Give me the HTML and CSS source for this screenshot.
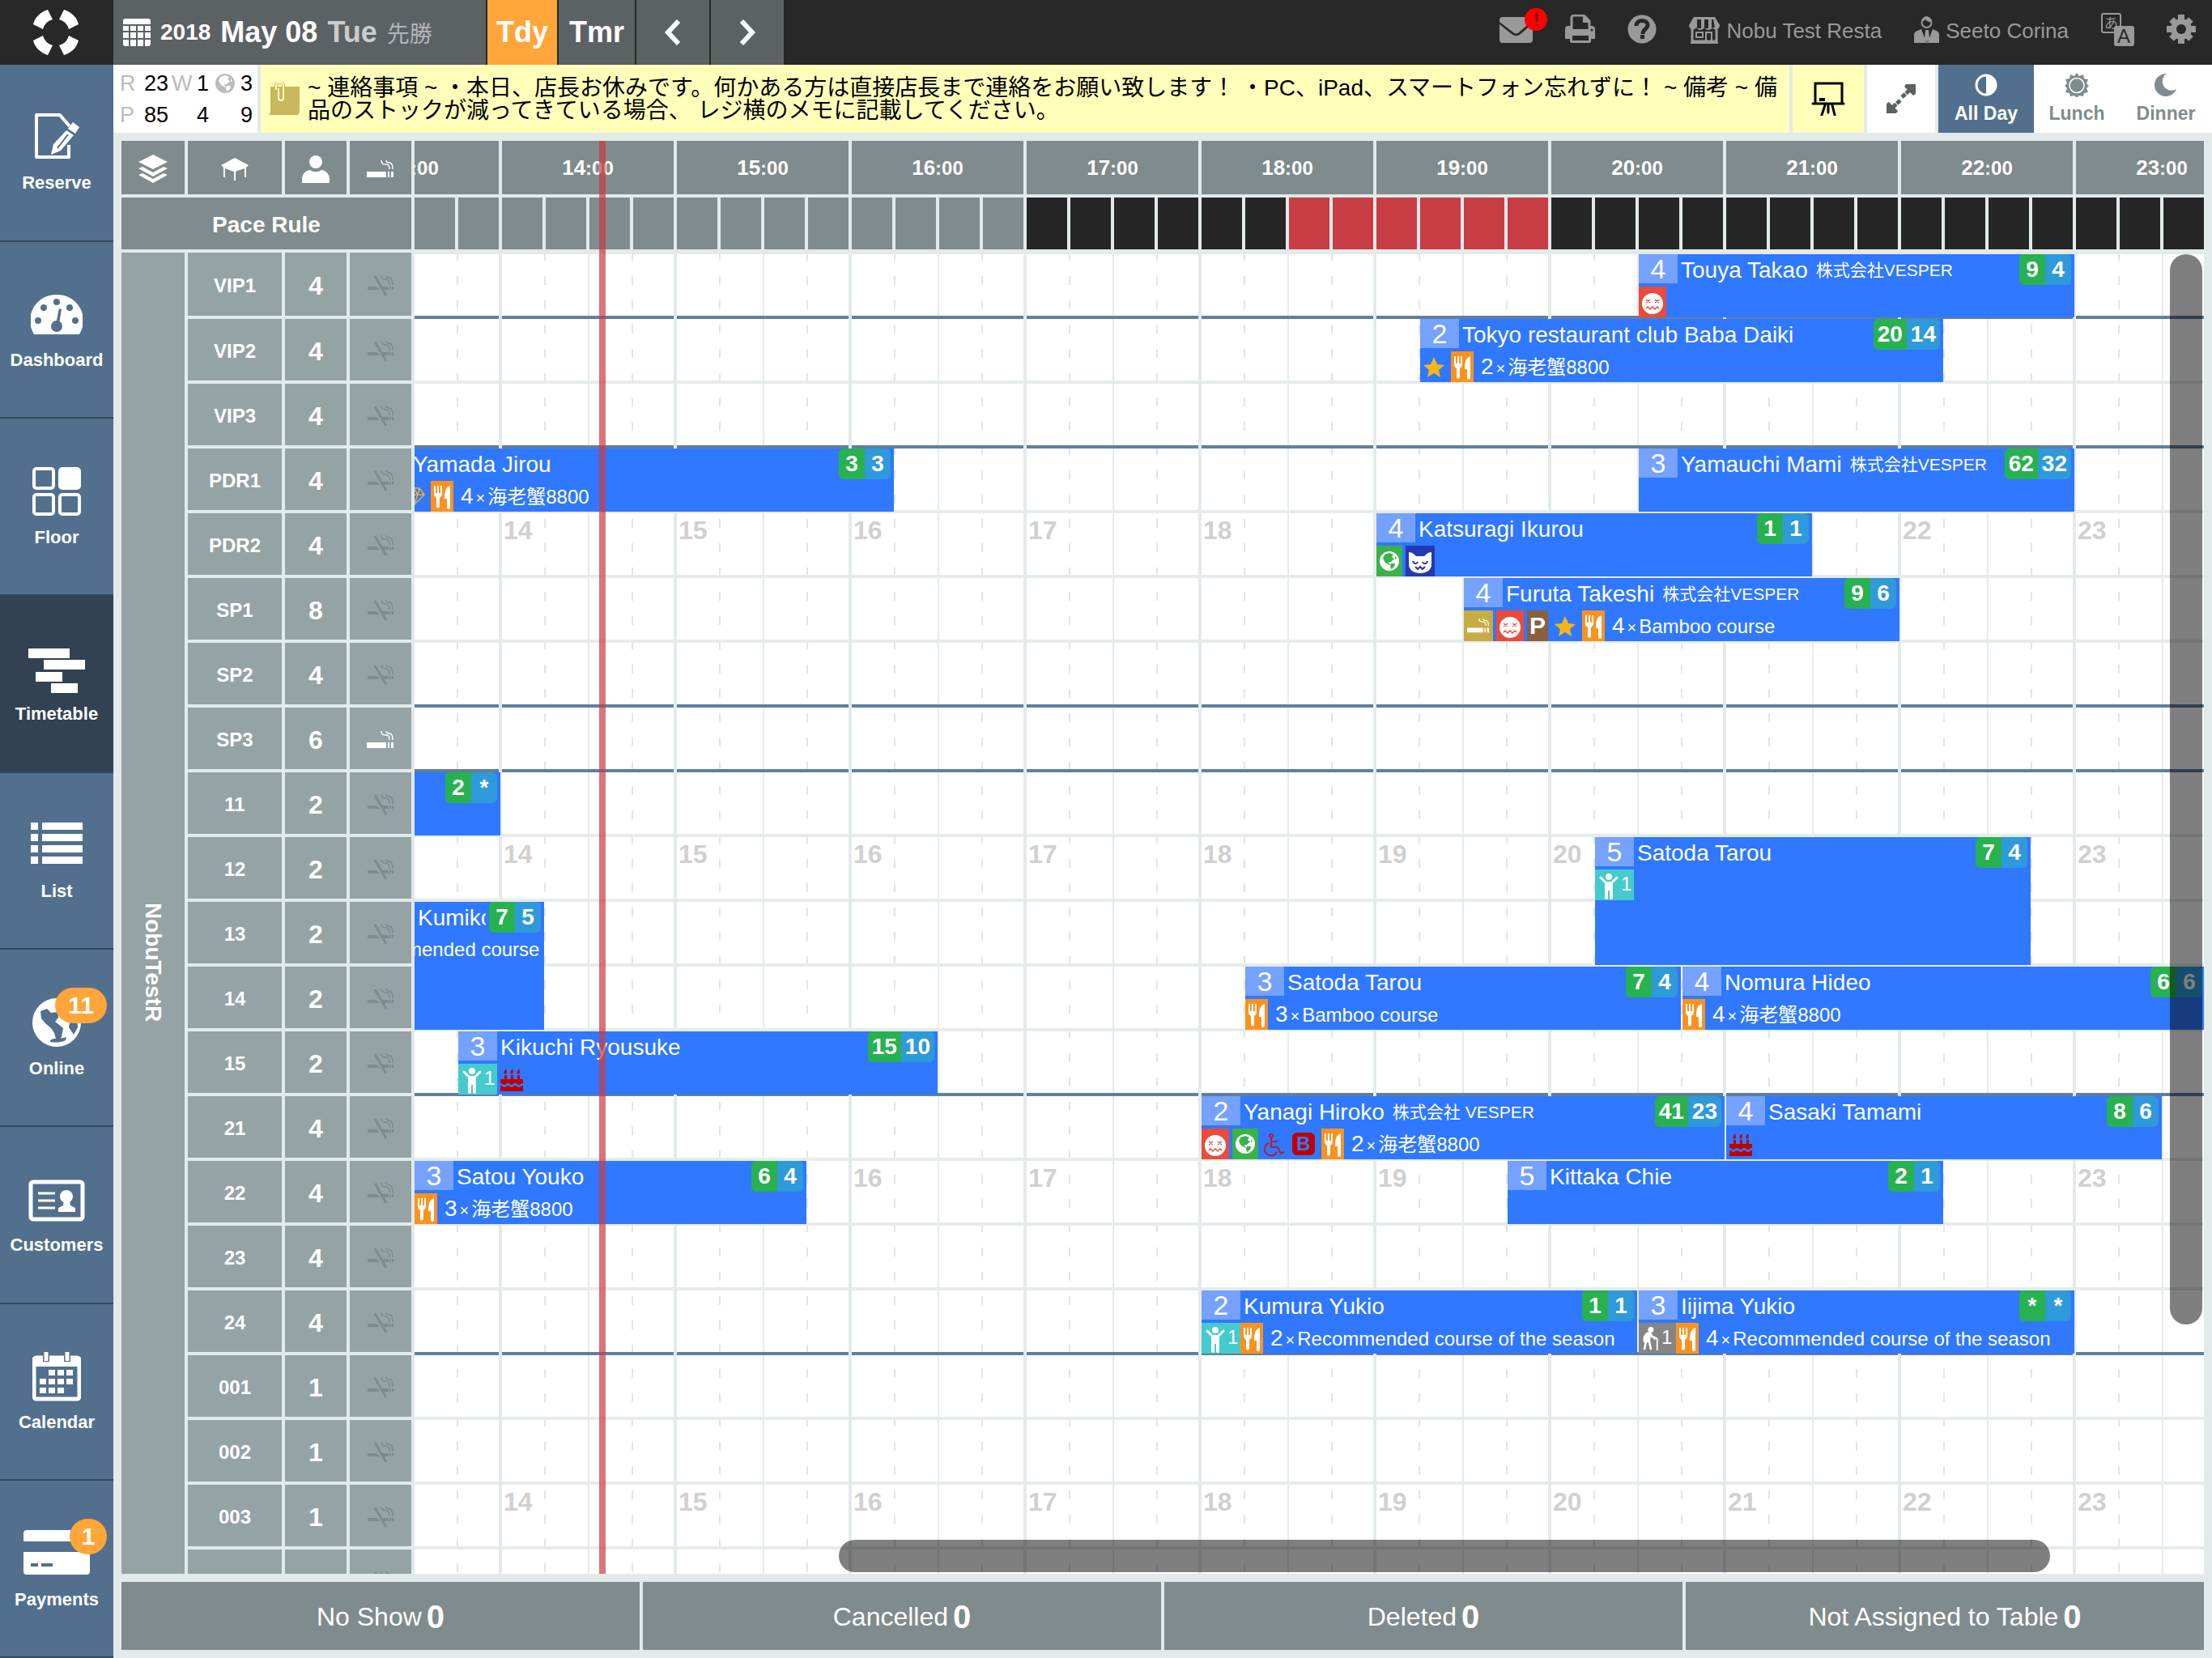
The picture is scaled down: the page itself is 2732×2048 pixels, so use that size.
FILE: index.html
```html
<!DOCTYPE html>
<html lang="en">
<head>
    <meta charset="UTF-8">
    <meta name="viewport" content="width=device-width, initial-scale=1.0">
    <title>Timetable</title>
    <link rel="stylesheet" href="styles.css">
</head>
<body>
    <!-- icons -->
    <svg class="sprite" width="0" height="0" aria-hidden="true">
        <symbol id="i-smoke" viewBox="0 0 34 24">
            <path d="M0 15h24v7H0zM26 15h2v7h-2zM30 15h3v7h-3z" fill="currentColor"/>
            <path d="M18 1c0 5 3 5 6 5s4 2 4 6M24 1c0 3 2 3 4 3s4 2 4 8" fill="none" stroke="currentColor" stroke-width="1.5"/>
        </symbol>
        <symbol id="i-nosmoke" viewBox="0 0 32 28">
            <path d="M0 15h11l4 4H0zM18 15h8v4h-6zM27 15h2v4h-2zM30 15h2v4h-2z" fill="currentColor"/>
            <path d="M9 2L23 26" stroke="currentColor" stroke-width="3"/>
            <path d="M17 1c0 5 3 5 6 5s4 2 4 7M23 1c0 3 2 3 4 3s4 3 4 9" fill="none" stroke="currentColor" stroke-width="1.5"/>
        </symbol>
        <symbol id="i-fork" viewBox="0 0 28 38">
            <path d="M4 6h2v9h2V6h2v9h2V6h2v10c0 3-2 4-3 5v10a2 2 0 0 1-4 1V21c-1-1-3-2-3-5z" fill="#fff"/>
            <path d="M24 6v27a2 2 0 0 1-4 0V22h-3c0-8 1-14 7-16z" fill="#fff"/>
        </symbol>
        <symbol id="i-face" viewBox="0 0 34 38">
            <circle cx="17" cy="21" r="13" fill="#fff"/>
            <path d="M9 16l5 4m0-4l-5 4M20 16l5 4m0-4l-5 4M9 27l2-2 3 3 3-3 3 3 3-3 2 2" fill="none" stroke="#e94b3c" stroke-width="1.5"/>
        </symbol>
        <symbol id="i-globe" viewBox="0 0 24 24">
            <circle cx="12" cy="12" r="12" fill="currentColor"/>
            <path class="land" d="M6 4l6-2 5 2-2 3 3 2-4 4-4 1 3 2-1 1-5-3-3-5zM14 15l5 0-1 4-4 3-1-4zM19 6l2 3-2 1z"/>
        </symbol>
        <symbol id="i-star" viewBox="0 0 34 38">
            <path d="M17 7l4 9 9 1-7 6 2 9-8-5-8 5 2-9-7-6 9-1z" fill="#f7b614"/>
        </symbol>
        <symbol id="i-cat" viewBox="0 0 36 38">
            <path d="M4 8c4 0 7 3 9 5h10c2-2 5-5 9-5v15c0 7-6 11-14 11S4 30 4 23z" fill="#fff"/>
            <path d="M9 19c1 4 5 4 6 1M21 20c1 3 5 3 6-1M12 26l3 3 3-3 3 3 3-3" fill="none" stroke="#2637b3" stroke-width="2"/>
        </symbol>
        <symbol id="i-chair" viewBox="0 0 30 38">
            <g fill="none" stroke="#b3202e" stroke-width="2">
                <circle cx="12" cy="9" r="2"/>
                <path d="M12 12v11h8l4 8 4-2M13 16h7M9 18a8 8 0 1 0 10 11"/>
            </g>
        </symbol>
        <symbol id="i-cake" viewBox="0 0 36 38">
            <path d="M9 14h3v8H9zM17 14h3v8h-3zM25 14h3v8h-3zM10 13c-3-2-1-4 1-7 1 4 2 5-1 7zM18 13c-3-2-1-4 1-7 1 4 2 5-1 7zM26 13c-3-2-1-4 1-7 1 4 2 5-1 7zM4 19h28v5c-3 0-3 2-5 2s-2-2-5-2-2 2-4 2-2-2-5-2-2 2-4 2-2-2-5-2zM4 27c3 0 3 2 5 2s2-2 4-2 3 2 5 2 2-2 4-2 3 2 5 2 2-2 5-2v7H4z" fill="#c00000"/>
        </symbol>
        <symbol id="i-gem" viewBox="0 0 34 38">
            <path d="M10 9h14l6 8-13 13L4 17zM4 17h26M10 9l2 8 5 13 5-13 2-8M12 17l5-8 5 8" fill="none" stroke="#f2ae2e" stroke-width="1.5"/>
        </symbol>
        <symbol id="i-child" viewBox="0 0 32 38">
            <circle cx="17" cy="9" r="4" fill="#fff"/>
            <path d="M7 10l7 7h6l7-7" fill="none" stroke="#fff" stroke-width="3" stroke-linecap="round"/>
            <path d="M12 15h10v20a2 2 0 0 1-4 0v-9h-2v9a2 2 0 0 1-4 0z" fill="#fff"/>
        </symbol>
        <symbol id="i-elder" viewBox="0 0 32 38">
            <circle cx="17" cy="7" r="4" fill="#fff"/>
            <path d="M12 12c4-1 6 1 6 4l6 3M15 24l2 10M8 34l2-9" fill="none" stroke="#fff" stroke-width="3" stroke-linecap="round"/>
            <path d="M13 11c-6 2-8 7-6 14h9l1-12z" fill="#fff"/>
            <path d="M22 21c0-3 4-3 4 0v15" fill="none" stroke="#fff" stroke-width="2"/>
        </symbol>
    </svg>

    <header class="topbar">
        <a class="logo" href="#" aria-label="Home">
            <svg width="58" height="58" viewBox="0 0 58 58">
                <g fill="#fff">
                    <path d="M19 1l6 12a17 17 0 0 0-12 12L1 19C3 11 9 4 19 1z"/>
                    <path d="M39 1l-6 12a17 17 0 0 1 12 12l12-6C55 11 49 4 39 1z"/>
                    <path d="M19 57l6-12a17 17 0 0 1-12-12L1 39c2 8 8 15 18 18z"/>
                    <path d="M39 57l-6-12a17 17 0 0 0 12-12l12 6c-2 8-8 15-18 18z"/>
                </g>
            </svg>
        </a>
        <button class="datebtn" type="button">
            <svg width="34" height="34" viewBox="0 0 34 34" fill="#fff">
                <path d="M3 0h28a3 3 0 0 1 3 3v4H0V3a3 3 0 0 1 3-3zM0 9h7v6H0zM9 9h7v6H9zM18 9h7v6h-7zM27 9h7v6h-7zM0 17h7v7H0zM9 17h7v7H9zM18 17h7v7h-7zM27 17h7v7h-7zM0 26h7v8H3a3 3 0 0 1-3-3zM9 26h7v8H9zM18 26h7v8h-7zM27 26h7v5a3 3 0 0 1-3 3h-4z"/>
            </svg>
            <span class="year">2018</span>
            <span class="day">May 08</span>
            <span class="wday">Tue</span>
            <span class="rokuyo">先勝</span>
        </button>
        <button class="tabbtn today" type="button">Tdy</button>
        <button class="tabbtn" type="button">Tmr</button>
        <button class="arrow" type="button" aria-label="Previous day">
            <svg width="24" height="34" viewBox="0 0 24 34"><path d="M19 3L6 17l13 14" fill="none" stroke="#fff" stroke-width="6"/></svg>
        </button>
        <button class="arrow" type="button" aria-label="Next day">
            <svg width="24" height="34" viewBox="0 0 24 34"><path d="M5 3l13 14L5 31" fill="none" stroke="#fff" stroke-width="6"/></svg>
        </button>
        <div class="tools">
            <a class="mail" href="#" aria-label="Messages">
                <svg width="41" height="36" viewBox="0 0 41 36" fill="currentColor">
                    <path d="M4 3h33a4 4 0 0 1 4 4L24 22c-3 2-4 2-7 0L0 9V7a4 4 0 0 1 4-4z"/>
                    <path d="M0 12l15 12c4 3 7 3 11 0l15-13v20a4 4 0 0 1-4 4H4a4 4 0 0 1-4-4z"/>
                </svg>
                <span class="alert">!</span>
            </a>
            <a href="#" aria-label="Print">
                <svg width="37" height="36" viewBox="0 0 37 36">
                    <path d="M8 18V4a3 3 0 0 1 3-3h12l7 7v10" fill="none" stroke="currentColor" stroke-width="3"/>
                    <path d="M22 1h3l5 5v4h-8zM4 14h3v4h23v-4h3a4 4 0 0 1 4 4v12h-5v3a2 2 0 0 1-2 2H8a2 2 0 0 1-2-2v-3H0V18a4 4 0 0 1 4-4zM9 26v6h20v-6z" fill="currentColor" fill-rule="evenodd"/>
                    <circle cx="33" cy="19" r="1.5" fill="#282828"/>
                </svg>
            </a>
            <a href="#" aria-label="Help">
                <svg width="36" height="36" viewBox="0 0 36 36">
                    <circle cx="18" cy="18" r="17.5" fill="currentColor"/>
                    <path d="M11 14c0-9 14-8 14-1 0 5-6 5-6 11" fill="none" stroke="#282828" stroke-width="5"/>
                    <path d="M16 25h5v5h-5z" fill="#282828"/>
                </svg>
            </a>
            <a href="#">
                <svg width="38" height="36" viewBox="0 0 38 36">
                    <path d="M6 3h26l6 10c0 6-7 7-9 3-2 4-8 4-10 0-2 4-8 4-10 0-2 4-9 3-9-3z" fill="currentColor"/>
                    <path d="M10 6h5v11h-5zM19 6h5v11h-5zM28 6h2l2 10h-4z" fill="#282828"/>
                    <path d="M4 18v15h30V18" fill="none" stroke="currentColor" stroke-width="3"/>
                    <path d="M2 35h34M9 22h8v6H9zM21 34V22h7v12" fill="none" stroke="currentColor" stroke-width="2"/>
                </svg>
                <span>Nobu Test Resta</span>
            </a>
            <a href="#">
                <svg width="31" height="36" viewBox="0 0 31 36">
                    <circle cx="15.5" cy="10" r="6" fill="none" stroke="currentColor" stroke-width="2"/>
                    <path d="M9 9c4-1 5-3 5-3s3 4 8 3c-1-9-12-9-13 0zM0 35V25c0-4 4-5 9-7l6 16h2l6-16c5 2 8 3 8 7v10zM14 19h4l1 11-3 4-3-4z" fill="currentColor"/>
                </svg>
                <span>Seeto Corina</span>
            </a>
            <a href="#" aria-label="Language">
                <svg width="41" height="41" viewBox="0 0 41 41">
                    <rect x="1" y="1" width="23" height="23" rx="2" fill="none" stroke="currentColor" stroke-width="2"/>
                    <text x="4" y="19" font-size="17" fill="currentColor">あ</text>
                    <rect x="16" y="16" width="25" height="25" rx="3" fill="currentColor"/>
                    <text x="20" y="37" font-size="24" fill="#282828">A</text>
                </svg>
            </a>
            <a href="#" aria-label="Settings">
                <svg width="36" height="36" viewBox="0 0 36 36">
                    <g stroke="currentColor" stroke-width="8"><path d="M18 0v36M0 18h36M6 6l24 24M30 6L6 30"/></g>
                    <circle cx="18" cy="18" r="13" fill="currentColor"/>
                    <circle cx="18" cy="18" r="6" fill="#282828"/>
                </svg>
            </a>
        </div>
    </header>

    <div class="page">
        <nav class="side">
            <a href="#">
                <svg width="60" height="64" viewBox="0 0 60 64">
                    <path d="M46 19L34 5H5v52h40V42" fill="none" stroke="#fff" stroke-width="4" stroke-linejoin="round"/>
                    <path d="M50 14l8 6-5 8-9-6zM42 24l9 6-16 19-12 5 3-13z" fill="#fff"/>
                    <path d="M44 29L31 46" stroke="#52708d" stroke-width="2"/>
                </svg>
                Reserve
            </a>
            <a href="#">
                <svg width="64" height="64" viewBox="0 0 64 64">
                    <path d="M32 8a32 32 0 0 1 28 49H4A32 32 0 0 1 32 8z" fill="#fff"/>
                    <g fill="#52708d"><circle cx="32" cy="17" r="4"/><circle cx="16" cy="24" r="4"/><circle cx="48" cy="24" r="4"/><circle cx="9" cy="40" r="4"/><circle cx="55" cy="40" r="4"/><circle cx="32" cy="47" r="7"/><path d="M35 25l3 1-3 18h-4z"/></g>
                </svg>
                Dashboard
            </a>
            <a href="#">
                <svg width="60" height="64" viewBox="0 0 60 64" fill="none" stroke="#fff" stroke-width="4">
                    <rect x="2" y="4" width="24" height="24" rx="3"/>
                    <rect x="34" y="4" width="24" height="24" rx="3" fill="#fff"/>
                    <rect x="2" y="36" width="24" height="24" rx="3"/>
                    <rect x="34" y="36" width="24" height="24" rx="3"/>
                </svg>
                Floor
            </a>
            <a class="active" href="#">
                <svg width="70" height="64" viewBox="0 0 70 64" fill="#fff">
                    <rect x="0" y="8" width="51" height="12"/>
                    <rect x="19" y="22" width="51" height="12"/>
                    <rect x="9" y="37" width="33" height="12"/>
                    <rect x="28" y="51" width="33" height="12"/>
                </svg>
                Timetable
            </a>
            <a href="#">
                <svg width="64" height="64" viewBox="0 0 64 64" fill="#fff">
                    <path d="M0 4h9v9H0zM14 4h50v9H14zM0 18h9v9H0zM14 18h50v9H14zM0 32h9v9H0zM14 32h50v9H14zM0 46h9v9H0zM14 46h50v9H14z"/>
                </svg>
                List
            </a>
            <a href="#">
                <svg width="60" height="64" viewBox="0 0 60 64">
                    <circle cx="30" cy="32" r="30" fill="#fff"/>
                    <path d="M10 18l8-3 5 5 9-1v7l-4 5 4 3 6 5-2 11-6 6-3-11-4-6-7-6-5-6zM48 22l7 4 1 12-5 9-6-9zM22 54c6-4 13-1 20-4l-1 4c-6 3-13 3-19 2z" fill="#52708d"/>
                </svg>
                Online
                <span class="count">11</span>
            </a>
            <a href="#">
                <svg width="70" height="64" viewBox="0 0 70 64">
                    <rect x="3" y="11" width="64" height="46" rx="3" fill="none" stroke="#fff" stroke-width="5"/>
                    <path d="M12 25h21M12 34h21M12 43h21" stroke="#fff" stroke-width="3"/>
                    <circle cx="47" cy="29" r="8" fill="#fff"/>
                    <path d="M44 34h7l1 6 6 3v5H37v-5l6-3z" fill="#fff"/>
                </svg>
                Customers
            </a>
            <a href="#">
                <svg width="60" height="64" viewBox="0 0 60 64">
                    <rect x="2" y="9" width="56" height="51" rx="3" fill="none" stroke="#fff" stroke-width="5"/>
                    <path d="M2 8h56v12H2z" fill="#fff"/>
                    <path d="M17 4v10M43 4v10" stroke="#52708d" stroke-width="8"/>
                    <path d="M17 2v11M43 2v11" stroke="#fff" stroke-width="5"/>
                    <path d="M20 24h8v7h-8zM31 24h8v7h-8zM42 24h8v7h-8zM9 35h8v7H9zM20 35h8v7h-8zM31 35h8v7h-8zM42 35h8v7h-8zM9 46h8v7H9zM20 46h8v7h-8zM31 46h8v7h-8z" fill="#fff"/>
                </svg>
                Calendar
            </a>
            <a href="#">
                <svg width="82" height="64" viewBox="0 0 82 64">
                    <path d="M4 3h74a4 4 0 0 1 4 4v10H0V7a4 4 0 0 1 4-4zM0 30h82v24a4 4 0 0 1-4 4H4a4 4 0 0 1-4-4z" fill="#fff"/>
                    <path d="M9 46h9M22 46h14" stroke="#52708d" stroke-width="4"/>
                </svg>
                Payments
                <span class="count one">1</span>
            </a>
        </nav>

        <main class="main">
            <section class="infobar">
                <div class="stats">
                    <span class="lbl">R</span><span>23</span><span class="lbl">W</span><span>1</span>
                    <span class="lbl"><svg width="24" height="24"><use href="#i-globe"/></svg></span><span>3</span>
                    <span class="lbl">P</span><span>85</span><span></span><span>4</span><span></span><span>9</span>
                </div>
                <div class="notice">
                    <svg width="38" height="42" viewBox="0 0 38 42">
                        <path d="M2 6h36v28c0 4-1 6-2 7H0c2-2 2-5 2-9z" fill="#c9b75e"/>
                        <path d="M9 10V5a4 4 0 0 1 9 0v15a3 3 0 0 1-6 0V8" fill="none" stroke="#c9b75e" stroke-width="4"/>
                        <path d="M9 10V5a4 4 0 0 1 9 0v15a3 3 0 0 1-6 0V8" fill="none" stroke="#ffffba" stroke-width="2"/>
                    </svg>
                    <p>~ 連絡事項 ~ ・本日、店長お休みです。何かある方は直接店長まで連絡をお願い致します！ ・PC、iPad、スマートフォン忘れずに！ ~ 備考 ~ 備<br>品のストックが減ってきている場合、 レジ横のメモに記載してください。</p>
                </div>
                <button class="easel" type="button" aria-label="Board">
                    <svg width="42" height="42" viewBox="0 0 42 42" fill="none" stroke="#000" stroke-width="3" stroke-linecap="round">
                        <path d="M5 26V2h33v24M2 27h38M17 29l-4 12M26 29l3 12M21 29v9"/>
                        <path d="M10 22h7" stroke-width="4" stroke-linecap="butt"/>
                    </svg>
                </button>
                <button class="expand" type="button" aria-label="Full screen">
                    <svg width="36" height="36" viewBox="0 0 36 36">
                        <path d="M36 0v12l-3 2L22 3l2-3zM0 36V24l3-2 11 11-2 3z" fill="#5b6265"/>
                        <path d="M30 6L19 16M6 30l11-10" stroke="#5b6265" stroke-width="5" stroke-dasharray="8 1"/>
                    </svg>
                </button>
                <button class="mode on" type="button">
                    <svg width="28" height="30" viewBox="0 0 28 30"><circle cx="14" cy="15" r="12" fill="none" stroke="#fff" stroke-width="3"/><path d="M14 3a12 12 0 0 1 0 24z" fill="#fff"/></svg>
                    All Day
                </button>
                <button class="mode" type="button">
                    <svg width="30" height="30" viewBox="0 0 30 30" fill="currentColor"><path d="M15 0l3 4 5-2 1 5 5 1-2 5 3 3-3 3 2 5-5 1-1 4-5-1-3 3-3-3-5 1-1-4-5-1 2-5-3-3 3-3-2-5 5-1 1-5 5 2z"/><circle cx="15" cy="15.5" r="9" stroke="#fff" stroke-width="1.5"/></svg>
                    Lunch
                </button>
                <button class="mode" type="button">
                    <svg width="28" height="30" viewBox="0 0 28 30" fill="currentColor"><path d="M15 1A14 14 0 1 0 27 20 11 11 0 0 1 15 1z"/></svg>
                    Dinner
                </button>
            </section>

            <section class="schedule">
                <table class="tables">
                    <colgroup><col class="c-area"><col class="c-name"><col class="c-cap"><col class="c-smoke"></colgroup>
                    <thead>
                        <tr>
                            <th aria-label="Area"><svg width="36" height="36" viewBox="0 0 36 36" fill="#fff"><path d="M18 0l18 9-18 9L0 9zM0 17l5-2 13 7 13-7 5 2-18 10zM0 25l5-2 13 7 13-7 5 2-18 10z"/></svg></th>
                            <th aria-label="Table"><svg width="34" height="28" viewBox="0 0 34 28" fill="#fff"><path d="M17 0l17 9-3 3v12h-2V13l-9 3-2 1v11h-2V17l-11-4v11H3V12L0 9z"/></svg></th>
                            <th aria-label="Seats"><svg width="34" height="34" viewBox="0 0 34 34" fill="#fff"><circle cx="17" cy="8" r="8"/><path d="M0 34v-5c0-6 5-11 10-11 4 3 10 3 14 0 5 0 10 5 10 11v5z"/></svg></th>
                            <th aria-label="Smoking"><svg width="34" height="24"><use href="#i-smoke"/></svg></th>
                        </tr>
                        <tr class="pace-head"><th colspan="4">Pace Rule</th></tr>
                    </thead>
                    <tbody>
                        <tr class="first"><th class="area" rowspan="22"><span>NobuTestR</span></th><th>VIP1</th><td>4</td><td><svg width="32" height="28"><use href="#i-nosmoke"/></svg></td></tr>
                        <tr><th>VIP2</th><td>4</td><td><svg width="32" height="28"><use href="#i-nosmoke"/></svg></td></tr>
                        <tr><th>VIP3</th><td>4</td><td><svg width="32" height="28"><use href="#i-nosmoke"/></svg></td></tr>
                        <tr><th>PDR1</th><td>4</td><td><svg width="32" height="28"><use href="#i-nosmoke"/></svg></td></tr>
                        <tr><th>PDR2</th><td>4</td><td><svg width="32" height="28"><use href="#i-nosmoke"/></svg></td></tr>
                        <tr><th>SP1</th><td>8</td><td><svg width="32" height="28"><use href="#i-nosmoke"/></svg></td></tr>
                        <tr><th>SP2</th><td>4</td><td><svg width="32" height="28"><use href="#i-nosmoke"/></svg></td></tr>
                        <tr><th>SP3</th><td>6</td><td class="ok"><svg width="34" height="24"><use href="#i-smoke"/></svg></td></tr>
                        <tr><th>11</th><td>2</td><td><svg width="32" height="28"><use href="#i-nosmoke"/></svg></td></tr>
                        <tr><th>12</th><td>2</td><td><svg width="32" height="28"><use href="#i-nosmoke"/></svg></td></tr>
                        <tr><th>13</th><td>2</td><td><svg width="32" height="28"><use href="#i-nosmoke"/></svg></td></tr>
                        <tr><th>14</th><td>2</td><td><svg width="32" height="28"><use href="#i-nosmoke"/></svg></td></tr>
                        <tr><th>15</th><td>2</td><td><svg width="32" height="28"><use href="#i-nosmoke"/></svg></td></tr>
                        <tr><th>21</th><td>4</td><td><svg width="32" height="28"><use href="#i-nosmoke"/></svg></td></tr>
                        <tr><th>22</th><td>4</td><td><svg width="32" height="28"><use href="#i-nosmoke"/></svg></td></tr>
                        <tr><th>23</th><td>4</td><td><svg width="32" height="28"><use href="#i-nosmoke"/></svg></td></tr>
                        <tr><th>24</th><td>4</td><td><svg width="32" height="28"><use href="#i-nosmoke"/></svg></td></tr>
                        <tr><th>001</th><td>1</td><td><svg width="32" height="28"><use href="#i-nosmoke"/></svg></td></tr>
                        <tr><th>002</th><td>1</td><td><svg width="32" height="28"><use href="#i-nosmoke"/></svg></td></tr>
                        <tr><th>003</th><td>1</td><td><svg width="32" height="28"><use href="#i-nosmoke"/></svg></td></tr>
                        <tr><th></th><td></td><td><svg width="32" height="28"><use href="#i-nosmoke"/></svg></td></tr>
                        <tr><th></th><td></td><td></td></tr>
                    </tbody>
                </table>

                <div class="timeline">
                    <div class="canvas">
                        <div class="hours">
                            <span>13<small>:00</small></span><span>14<small>:00</small></span><span>15<small>:00</small></span><span>16<small>:00</small></span><span>17<small>:00</small></span><span>18<small>:00</small></span><span>19<small>:00</small></span><span>20<small>:00</small></span><span>21<small>:00</small></span><span>22<small>:00</small></span><span>23<small>:00</small></span>
                        </div>
                        <div class="pace">
                            <i></i><i></i><i></i><i></i><i></i><i></i><i></i><i></i><i></i><i></i><i></i><i></i><i></i><i></i><i></i><i></i>
                            <i class="shut"></i><i class="shut"></i><i class="shut"></i><i class="shut"></i><i class="shut"></i><i class="shut"></i>
                            <i class="full"></i><i class="full"></i><i class="full"></i><i class="full"></i><i class="full"></i><i class="full"></i>
                            <i class="shut"></i><i class="shut"></i><i class="shut"></i><i class="shut"></i><i class="shut"></i><i class="shut"></i><i class="shut"></i><i class="shut"></i><i class="shut"></i><i class="shut"></i><i class="shut"></i><i class="shut"></i><i class="shut"></i><i class="shut"></i><i class="shut"></i><i class="shut"></i>
                        </div>

                        <!-- 4 columns per hour, first column is 13:00 -->
                        <div class="grid">
                            <div class="lane group" style="--row:1"></div>
                            <div class="lane" style="--row:2"></div>
                            <div class="lane group" style="--row:3"></div>
                            <div class="lane" style="--row:4"></div>
                            <div class="lane" style="--row:5"></div>
                            <div class="lane" style="--row:6"></div>
                            <div class="lane group" style="--row:7"></div>
                            <div class="lane group" style="--row:8"></div>
                            <div class="lane" style="--row:9"></div>
                            <div class="lane" style="--row:10"></div>
                            <div class="lane" style="--row:11"></div>
                            <div class="lane" style="--row:12"></div>
                            <div class="lane group" style="--row:13"></div>
                            <div class="lane" style="--row:14"></div>
                            <div class="lane" style="--row:15"></div>
                            <div class="lane" style="--row:16"></div>
                            <div class="lane group" style="--row:17"></div>
                            <div class="lane" style="--row:18"></div>
                            <div class="lane" style="--row:19"></div>
                            <div class="lane" style="--row:20"></div>
                            <div class="lane" style="--row:21"></div>

                            <span class="hr" style="--row:5;--from:5">14</span><span class="hr" style="--row:5;--from:9">15</span><span class="hr" style="--row:5;--from:13">16</span><span class="hr" style="--row:5;--from:17">17</span><span class="hr" style="--row:5;--from:21">18</span><span class="hr" style="--row:5;--from:37">22</span><span class="hr" style="--row:5;--from:41">23</span>
                            <span class="hr" style="--row:10;--from:5">14</span><span class="hr" style="--row:10;--from:9">15</span><span class="hr" style="--row:10;--from:13">16</span><span class="hr" style="--row:10;--from:17">17</span><span class="hr" style="--row:10;--from:21">18</span><span class="hr" style="--row:10;--from:25">19</span><span class="hr" style="--row:10;--from:29">20</span><span class="hr" style="--row:10;--from:41">23</span>
                            <span class="hr" style="--row:15;--from:13">16</span><span class="hr" style="--row:15;--from:17">17</span><span class="hr" style="--row:15;--from:21">18</span><span class="hr" style="--row:15;--from:25">19</span><span class="hr" style="--row:15;--from:41">23</span>
                            <span class="hr" style="--row:20;--from:5">14</span><span class="hr" style="--row:20;--from:9">15</span><span class="hr" style="--row:20;--from:13">16</span><span class="hr" style="--row:20;--from:17">17</span><span class="hr" style="--row:20;--from:21">18</span><span class="hr" style="--row:20;--from:25">19</span><span class="hr" style="--row:20;--from:29">20</span><span class="hr" style="--row:20;--from:33">21</span><span class="hr" style="--row:20;--from:37">22</span><span class="hr" style="--row:20;--from:41">23</span>

                            <div class="event" style="--row:1;--from:31;--to:41">
                                <div class="head"><span class="party">4</span><span class="who">Touya Takao</span><span class="company">株式会社VESPER</span><span class="visits"><b>9</b><b>4</b></span></div>
                                <div class="tags"><svg class="tag t34 red"><use href="#i-face"/></svg></div>
                            </div>
                            <div class="event" style="--row:2;--from:26;--to:38">
                                <div class="head"><span class="party">2</span><span class="who">Tokyo restaurant club Baba Daiki</span><span class="visits"><b>20</b><b>14</b></span></div>
                                <div class="tags"><svg class="tag t34"><use href="#i-star"/></svg><svg class="tag t28 orange"><use href="#i-fork"/></svg><span class="course"><em>2</em><i>×</i>海老蟹8800</span></div>
                            </div>
                            <div class="event" style="--row:4;--from:2;--to:14">
                                <div class="head"><span class="party off"></span><span class="who">Yamada Jirou</span><span class="visits"><b>3</b><b>3</b></span></div>
                                <div class="tags after-chip"><svg class="tag t34"><use href="#i-gem"/></svg><svg class="tag t28 orange"><use href="#i-fork"/></svg><span class="course"><em>4</em><i>×</i>海老蟹8800</span></div>
                            </div>
                            <div class="event" style="--row:4;--from:31;--to:41">
                                <div class="head"><span class="party">3</span><span class="who">Yamauchi Mami</span><span class="company">株式会社VESPER</span><span class="visits"><b>62</b><b>32</b></span></div>
                            </div>
                            <div class="event" style="--row:5;--from:25;--to:35">
                                <div class="head"><span class="party">4</span><span class="who">Katsuragi Ikurou</span><span class="visits"><b>1</b><b>1</b></span></div>
                                <div class="tags"><span class="tag t32 green"><svg width="24" height="24"><use href="#i-globe"/></svg></span><svg class="tag t36 navy"><use href="#i-cat"/></svg></div>
                            </div>
                            <div class="event" style="--row:6;--from:27;--to:37">
                                <div class="head"><span class="party">4</span><span class="who">Furuta Takeshi</span><span class="company">株式会社VESPER</span><span class="visits"><b>9</b><b>6</b></span></div>
                                <div class="tags"><span class="tag t36 khaki"><svg width="28" height="20"><use href="#i-smoke"/></svg></span><svg class="tag t34 red"><use href="#i-face"/></svg><span class="tag t26 brown">P</span><svg class="tag t34"><use href="#i-star"/></svg><svg class="tag t28 orange"><use href="#i-fork"/></svg><span class="course"><em>4</em><i>×</i>Bamboo course</span></div>
                            </div>
                            <div class="event" style="--row:9;--from:3;--to:5">
                                <div class="head"><span class="visits"><b>2</b><b>*</b></span></div>
                            </div>
                            <div class="event tall" style="--row:10;--from:30;--to:40">
                                <div class="head"><span class="party">5</span><span class="who">Satoda Tarou</span><span class="visits"><b>7</b><b>4</b></span></div>
                                <div class="tags"><span class="tag kid"><svg width="32" height="38"><use href="#i-child"/></svg>1</span></div>
                            </div>
                            <div class="event tall" style="--row:11;--from:3;--to:6">
                                <div class="head"><span class="who">Kumiko</span><span class="visits"><b>7</b><b>5</b></span></div>
                                <div class="tags"><span class="course cut">mended course</span></div>
                            </div>
                            <div class="event" style="--row:12;--from:22;--to:32">
                                <div class="head"><span class="party">3</span><span class="who">Satoda Tarou</span><span class="visits"><b>7</b><b>4</b></span></div>
                                <div class="tags"><svg class="tag t28 orange"><use href="#i-fork"/></svg><span class="course"><em>3</em><i>×</i>Bamboo course</span></div>
                            </div>
                            <div class="event" style="--row:12;--from:32;--to:44">
                                <div class="head"><span class="party">4</span><span class="who">Nomura Hideo</span><span class="visits"><b>6</b><b>6</b></span></div>
                                <div class="tags"><svg class="tag t28 orange"><use href="#i-fork"/></svg><span class="course"><em>4</em><i>×</i>海老蟹8800</span></div>
                            </div>
                            <div class="event" style="--row:13;--from:4;--to:15">
                                <div class="head"><span class="party">3</span><span class="who">Kikuchi Ryousuke</span><span class="visits"><b>15</b><b>10</b></span></div>
                                <div class="tags"><span class="tag kid"><svg width="32" height="38"><use href="#i-child"/></svg>1</span><svg class="tag t36"><use href="#i-cake"/></svg></div>
                            </div>
                            <div class="event" style="--row:14;--from:21;--to:33">
                                <div class="head"><span class="party">2</span><span class="who">Yanagi Hiroko</span><span class="company">株式会社 VESPER</span><span class="visits"><b>41</b><b>23</b></span></div>
                                <div class="tags"><svg class="tag t34 red"><use href="#i-face"/></svg><span class="tag t32 green"><svg width="24" height="24"><use href="#i-globe"/></svg></span><svg class="tag t30"><use href="#i-chair"/></svg><span class="tag t36"><span class="bmark">B</span></span><svg class="tag t28 orange"><use href="#i-fork"/></svg><span class="course"><em>2</em><i>×</i>海老蟹8800</span></div>
                            </div>
                            <div class="event" style="--row:14;--from:33;--to:43">
                                <div class="head"><span class="party">4</span><span class="who">Sasaki Tamami</span><span class="visits"><b>8</b><b>6</b></span></div>
                                <div class="tags"><svg class="tag t36"><use href="#i-cake"/></svg></div>
                            </div>
                            <div class="event" style="--row:15;--from:3;--to:12">
                                <div class="head"><span class="party">3</span><span class="who">Satou Youko</span><span class="visits"><b>6</b><b>4</b></span></div>
                                <div class="tags"><svg class="tag t28 orange"><use href="#i-fork"/></svg><span class="course"><em>3</em><i>×</i>海老蟹8800</span></div>
                            </div>
                            <div class="event" style="--row:15;--from:28;--to:38">
                                <div class="head"><span class="party">5</span><span class="who">Kittaka Chie</span><span class="visits"><b>2</b><b>1</b></span></div>
                            </div>
                            <div class="event" style="--row:17;--from:21;--to:31">
                                <div class="head"><span class="party">2</span><span class="who">Kumura Yukio</span><span class="visits"><b>1</b><b>1</b></span></div>
                                <div class="tags"><span class="tag kid"><svg width="32" height="38"><use href="#i-child"/></svg>1</span><svg class="tag t28 orange"><use href="#i-fork"/></svg><span class="course"><em>2</em><i>×</i>Recommended course of the season</span></div>
                            </div>
                            <div class="event" style="--row:17;--from:31;--to:41">
                                <div class="head"><span class="party">3</span><span class="who">Iijima Yukio</span><span class="visits"><b>*</b><b>*</b></span></div>
                                <div class="tags"><span class="tag kid old"><svg width="28" height="38"><use href="#i-elder"/></svg>1</span><svg class="tag t28 orange"><use href="#i-fork"/></svg><span class="course"><em>4</em><i>×</i>Recommended course of the season</span></div>
                            </div>
                        </div>
                    </div>
                    <div class="now"></div>
                    <div class="bar-v"></div>
                    <div class="bar-h"></div>
                </div>
            </section>

            <footer class="summary">
                <button type="button">No Show<b>0</b></button>
                <button type="button">Cancelled<b>0</b></button>
                <button type="button">Deleted<b>0</b></button>
                <button type="button">Not Assigned to Table<b>0</b></button>
            </footer>
        </main>
    </div>
</body>
</html>
```

FILE: styles.css
```css
*{
    margin: 0;
    padding: 0;
    box-sizing: border-box;
}

html,body{
    height: 100%;
}

body{
    display: flex;
    flex-direction: column;
    overflow: hidden;
    background: #e2eaea;
    font-family: "Liberation Sans", Arial, "Noto Sans CJK JP", sans-serif;
    color: #000;
}

a{
    color: inherit;
    text-decoration: none;
}

button{
    border: 0;
    font-family: inherit;
    cursor: pointer;
}

svg{
    display: block;
    flex: none;
}

.sprite{
    position: absolute;
}

/* top bar */
.topbar{
    display: flex;
    gap: 2px;
    flex: none;
    height: 80px;
    background: #282828;
}

.logo{
    width: 138px;
    display: flex;
    align-items: center;
    justify-content: center;
}

.datebtn,
.tabbtn,
.arrow{
    background: #5c6164;
    color: #fff;
}

.datebtn{
    width: 460px;
    padding: 0 12px;
    display: flex;
    align-items: center;
    gap: 12px;
    font-size: 36px;
    font-weight: bold;
}

.year{
    font-size: 28px;
}

.wday{
    color: #ccc;
}

.rokuyo{
    font-size: 28px;
    font-weight: normal;
    color: #b4b6b7;
}

.tabbtn{
    width: 94px;
    font-size: 36px;
    font-weight: bold;
}

.tabbtn.today{
    width: 86px;
    background: #ffa53a;
}

.arrow{
    width: 90px;
    display: flex;
    align-items: center;
    justify-content: center;
}

.tools{
    flex: 1;
    display: flex;
    align-items: center;
    justify-content: flex-end;
    gap: 40px;
    padding-right: 20px;
    padding-bottom: 8px;
    color: #999;
    font-size: 26px;
}

.tools a{
    display: flex;
    align-items: center;
    gap: 8px;
    white-space: nowrap;
}

.tools a span{
    padding-top: 4px;
}

.tools .mail{
    position: relative;
}

.tools .alert{
    position: absolute;
    top: -8px;
    right: -18px;
    width: 28px;
    height: 28px;
    padding: 0;
    border-radius: 50%;
    background: #f00;
    color: #5a0000;
    font-size: 24px;
    line-height: 28px;
    text-align: center;
}

.page{
    flex: 1;
    min-height: 0;
    display: flex;
}

/* side menu */
.side{
    width: 140px;
    flex: none;
    display: flex;
    flex-direction: column;
    background: #52708d;
}

.side a{
    position: relative;
    flex: 1;
    display: flex;
    flex-direction: column;
    align-items: center;
    justify-content: center;
    gap: 12px;
    border-bottom: 2px solid #34495e;
    color: #fff;
    font-size: 22px;
    font-weight: bold;
    line-height: 26px;
}

.side a.active{
    background: #324252;
}

.count{
    position: absolute;
    top: 47px;
    right: 8px;
    width: 64px;
    height: 44px;
    border-radius: 22px;
    background: #ffa53a;
    font-size: 30px;
    line-height: 44px;
    text-align: center;
}

.count.one{
    width: 46px;
}

.main{
    flex: 1;
    min-width: 0;
    display: flex;
    flex-direction: column;
}

/* info bar */
.infobar{
    display: flex;
    gap: 4px;
    height: 84px;
    flex: none;
}

.stats{
    width: 178px;
    padding: 3px 4px;
    display: grid;
    grid-template-columns: 26px 38px 30px 20px 32px 22px;
    align-items: center;
    background: #fff;
    font-size: 27px;
    line-height: 38px;
    text-align: right;
}

.stats .lbl{
    padding-left: 4px;
    color: #bbb;
    text-align: left;
}

.stats .lbl svg{
    margin-left: auto;
}

.land{
    fill: var(--land, #fff);
}

.notice{
    flex: 1;
    min-width: 0;
    display: flex;
    align-items: center;
    gap: 10px;
    padding: 0 10px;
    background: #ffffba;
    font-size: 28px;
    line-height: 28px;
}

.notice p{
    padding-top: 2px;
    white-space: nowrap;
}

.easel,
.expand,
.mode{
    display: flex;
    align-items: center;
    justify-content: center;
    background: #fff;
}

.easel{
    width: 88px;
    background: #ffffba;
}

.expand{
    width: 84px;
}

.mode{
    width: 106px;
    flex-direction: column;
    gap: 6px;
    color: #7f8c8d;
    font-size: 23px;
    font-weight: bold;
    line-height: 28px;
}

.mode + .mode{
    margin-left: -4px;
}

.mode:last-child{
    width: 114px;
}

.mode.on{
    width: 118px;
    background: #52708d;
    color: #fff;
}

/* schedule */
.schedule{
    flex: 1;
    min-height: 0;
    display: flex;
    align-items: flex-start;
    margin: 10px 10px 0;
    overflow: hidden;
}

.tables{
    width: 362px;
    flex: none;
    table-layout: fixed;
    border-spacing: 0;
    color: #fff;
}

.c-area{ width: 82px; }
.c-name{ width: 120px; }
.c-cap{ width: 80px; }
.c-smoke{ width: 80px; }

.tables th,
.tables td{
    height: 80px;
    padding-top: 3px;
    border-right: 4px solid #e2eaea;
    border-bottom: 4px solid #e2eaea;
    background: #95a3a4;
    text-align: center;
    vertical-align: middle;
    font-size: 32px;
    font-weight: bold;
    line-height: 34px;
}

.tables svg{
    margin: 0 auto;
}

.tables thead th{
    height: 70px;
    background: #7f8b8c;
}

.tables .pace-head th{
    height: 68px;
    font-size: 28px;
}

.tables .first th,
.tables .first td{
    height: 82px;
}

.tables tbody th{
    font-size: 24px;
}

.tables tbody td:last-child{
    color: #7f8b8c;
}

.tables tbody td.ok{
    color: #fff;
}

.tables tbody .area{
    font-size: 28px;
}

.area span{
    writing-mode: vertical-rl;
}

.timeline{
    position: relative;
    flex: 1;
    min-width: 0;
    align-self: stretch;
    overflow: hidden;
}

/* the view is scrolled half an hour past 13:00 */
.canvas{
    width: 2376px;
    margin-left: -108px;
}

.hours{
    display: grid;
    grid-template-columns: repeat(11, 216px);
    grid-template-rows: 70px;
}

.hours span{
    display: flex;
    align-items: baseline;
    justify-content: center;
    border-right: 4px solid #e2eaea;
    border-bottom: 4px solid #e2eaea;
    background: #7f8b8c;
    color: #fff;
    font-size: 26px;
    font-weight: bold;
    line-height: 66px;
}

.hours small{
    font-size: 24px;
}

.pace{
    display: grid;
    grid-template-columns: repeat(44, 54px);
    height: 68px;
}

.pace i{
    border-right: 4px solid #e2eaea;
    border-bottom: 4px solid #e2eaea;
    background: #7f8b8c;
}

.pace .shut{
    background: #262626;
}

.pace .full{
    background: #c83c44;
}

/* half hour lines, and dashed quarter lines masked by white stripes */
.grid{
    position: relative;
    display: grid;
    grid-template-columns: repeat(44, 54px);
    grid-template-rows: repeat(21, 80px);
    border-top: 2px solid #e2eaea;
    background:
        linear-gradient(to right, transparent 106px, #e6ebeb 106px, #e6ebeb 108px, transparent 108px) 0 0 / 216px 100%,
        repeating-linear-gradient(transparent 0, transparent 8px, #fff 8px, #fff 27px, transparent 27px, transparent 30px),
        linear-gradient(to right, #fff 52px, #e4e4e4 52px, #e4e4e4 54px, #fff 54px) 0 0 / 108px 100%;
}

/* hour lines */
.grid::before{
    content: "";
    position: absolute;
    inset: 0;
    z-index: 1;
    background: linear-gradient(to right, transparent 212px, #e4eaea 212px) 0 0 / 216px 100%;
}

.lane{
    grid-row: var(--row);
    grid-column: 1 / -1;
    border-bottom: 4px solid #e6ebeb;
}

.lane.group{
    border-bottom-color: #5f7f9f;
}

.hr{
    grid-row: var(--row);
    grid-column: var(--from);
    z-index: 1;
    padding-left: 2px;
    color: #d0d0d0;
    font-size: 32px;
    font-weight: bold;
    line-height: 42px;
}

.event{
    grid-row: var(--row);
    grid-column: var(--from) / var(--to);
    z-index: 2;
    min-width: 0;
    margin: 0 2px 2px 0;
    overflow: hidden;
    background: #2f78ff;
    color: #fff;
    white-space: nowrap;
}

.event.tall{
    grid-row: var(--row) / span 2;
}

.head{
    display: flex;
    height: 40px;
    padding-right: 4px;
    line-height: 40px;
}

.party{
    width: 48px;
    height: 36px;
    flex: none;
    background: #75a1ff;
    font-size: 34px;
    line-height: 36px;
    text-align: center;
}

.party.off{
    visibility: hidden;
}

.who{
    min-width: 0;
    margin: 0 4px;
    overflow: hidden;
    font-size: 28px;
}

.company{
    margin-left: 6px;
    font-size: 21px;
}

.visits{
    display: flex;
    margin-left: auto;
    height: 38px;
    flex: none;
    border-radius: 6px;
    overflow: hidden;
    background: #2e9ada;
    font-size: 28px;
    line-height: 38px;
    text-align: center;
}

.visits b{
    min-width: 32px;
    padding: 0 5px;
}

.visits b:first-child{
    background: #27b150;
}

.tags{
    display: flex;
    height: 38px;
}

.tags.after-chip{
    margin-left: 36px;
}

.tag{
    display: flex;
    align-items: center;
    justify-content: center;
    flex: none;
    height: 38px;
    margin-right: 4px;
}

.t26{ width: 26px; }
.t28{ width: 28px; }
.t30{ width: 30px; }
.t32{ width: 32px; }
.t34{ width: 34px; }
.t36{ width: 36px; }

.red{ background: #e94b3c; }
.orange{ background: #fb9220; }
.navy{ background: #2637b3; }
.khaki{ background: #c6ac42; }

.green{
    --land: #38b349;
    background: #38b349;
}

.brown{
    background: #8a5f3c;
    font-size: 30px;
    font-weight: bold;
}

.tag.kid{
    width: 48px;
    margin-right: 0;
    justify-content: flex-start;
    background: #45cace;
    font-size: 24px;
    line-height: 36px;
    align-items: flex-start;
}

.tag.kid.old{
    width: 46px;
    background: #858585;
}

.bmark{
    width: 28px;
    height: 28px;
    border-radius: 6px;
    background: #c00000;
    color: #2f78ff;
    font-size: 24px;
    font-weight: bold;
    line-height: 28px;
    text-align: center;
}

.course{
    margin-left: 5px;
    font-size: 24px;
    line-height: 38px;
}

.course em{
    font-size: 28px;
    font-style: normal;
}

.course i{
    margin: 0 3px;
    font-size: 20px;
    font-style: normal;
}

.course.cut{
    margin-left: -11px;
}

.now{
    position: absolute;
    top: 0;
    bottom: 0;
    left: 228px;
    width: 8px;
    z-index: 3;
    background: rgba(204, 58, 64, .7);
}

.bar-v,
.bar-h{
    position: absolute;
    z-index: 3;
    border-radius: 20px;
    background: rgba(0, 0, 0, .5);
}

.bar-v{
    top: 140px;
    right: 2px;
    width: 40px;
    height: 74.7%;
}

.bar-h{
    left: 23.7%;
    bottom: 2px;
    width: 67.7%;
    height: 40px;
}

/* bottom counters */
.summary{
    display: flex;
    gap: 4px;
    flex: none;
    margin: 10px;
}

.summary button{
    flex: 1;
    height: 84px;
    padding-top: 3px;
    display: flex;
    align-items: center;
    justify-content: center;
    gap: 6px;
    background: #7f8b8c;
    color: #fff;
    font-size: 32px;
}

.summary b{
    font-size: 40px;
}
```
